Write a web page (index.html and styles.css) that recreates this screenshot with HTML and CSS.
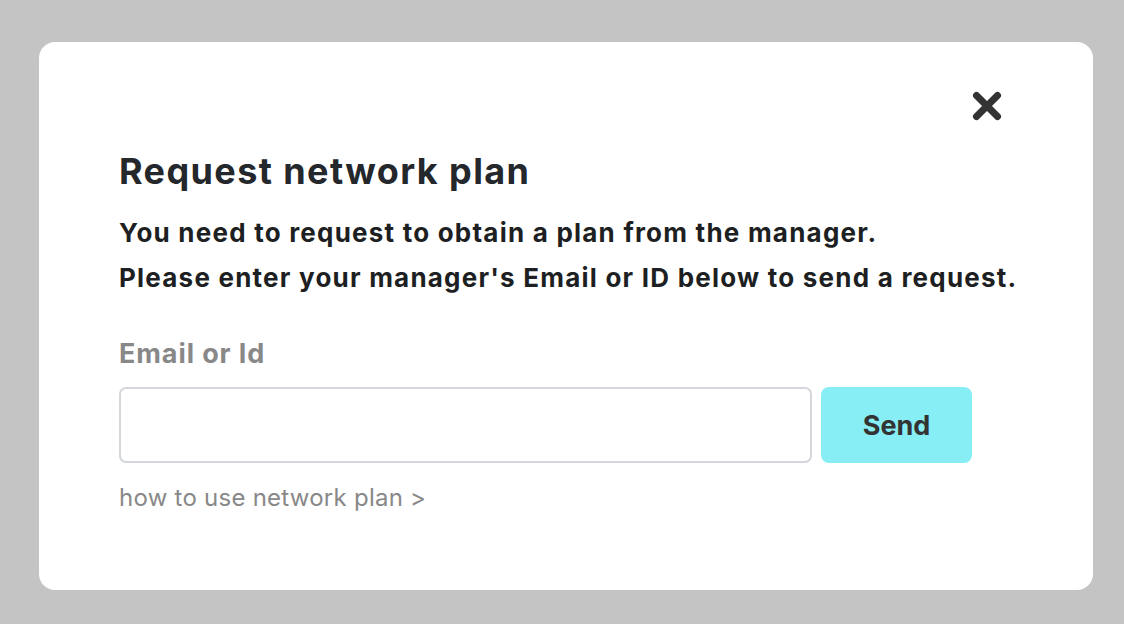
FILE: index.html
```html
<!DOCTYPE html>
<html>
<head>
<meta charset="utf-8">
<link rel="stylesheet" href="styles.css">
</head>
<body>
<div class="modal">
  <div class="close-row">
    <button class="close" aria-label="Close">
      <svg width="30" height="30" viewBox="0 0 30 30"><path d="M4.5 4.5 L25.5 25.5 M25.5 4.5 L4.5 25.5" stroke="#333" stroke-width="7" stroke-linecap="round"/></svg>
    </button>
  </div>
  <h1 class="title">Request network plan</h1>
  <p class="desc">You need to request to obtain a plan from the manager.<br>Please enter your manager's Email or ID below to send a request.</p>
  <label class="label" for="eid">Email or Id</label>
  <div class="form-row">
    <input id="eid" class="input" type="text">
    <button class="send">Send</button>
  </div>
  <a class="help" href="#">how to use network plan &gt;</a>
</div>
</body>
</html>
```
FILE: styles.css
```css
html, body { margin: 0; padding: 0; }
body {
  background: #c4c4c4;
  width: 1124px;
  height: 624px;
  font-family: Inter, "Noto Sans", sans-serif;
  padding: 42px 31px 0 39px;
  box-sizing: border-box;
}
.modal {
  background: #fff;
  border-radius: 16px;
  height: 548px;
  box-sizing: border-box;
  padding: 0 80px 0 80px;
  display: flex;
  flex-direction: column;
  align-items: flex-start;
}
.close-row {
  align-self: stretch;
  display: flex;
  justify-content: flex-end;
  padding-top: 49px;
  padding-right: 11px;
}
.close {
  border: 0; background: none; padding: 0; width: 30px; height: 30px; display: block;
}
.close svg { display: block; }
.title {
  margin: 28px 0 0;
  font-size: 36px;
  font-weight: 700;
  color: #24272b;
  line-height: 44px;
  letter-spacing: 1.4px;
  white-space: nowrap;
}
.desc {
  margin: 17px 0 0;
  font-size: 26px;
  font-weight: 700;
  line-height: 45px;
  letter-spacing: 1.22px;
  color: #1d1f22;
  white-space: nowrap;
}
.label {
  margin-top: 37px;
  font-size: 27px;
  font-weight: 700;
  color: #888;
  line-height: 34px;
  letter-spacing: 0.9px;
}
.form-row {
  margin-top: 16px;
  display: flex;
  gap: 9px;
}
.input {
  width: 693px;
  height: 76px;
  box-sizing: border-box;
  border: 2px solid #d3d6db;
  border-radius: 7px;
  padding: 0 16px;
  font: inherit;
  font-size: 24px;
  outline: none;
}
.send {
  width: 151px;
  height: 76px;
  border: 0;
  border-radius: 8px;
  background: #87eef5;
  color: #333;
  font-family: inherit;
  font-size: 27px;
  font-weight: 700;
  padding: 0;
}
.help {
  margin-top: 18px;
  font-size: 24px;
  color: #888;
  text-decoration: none;
  line-height: 34px;
  letter-spacing: 0.25px;
}
```
